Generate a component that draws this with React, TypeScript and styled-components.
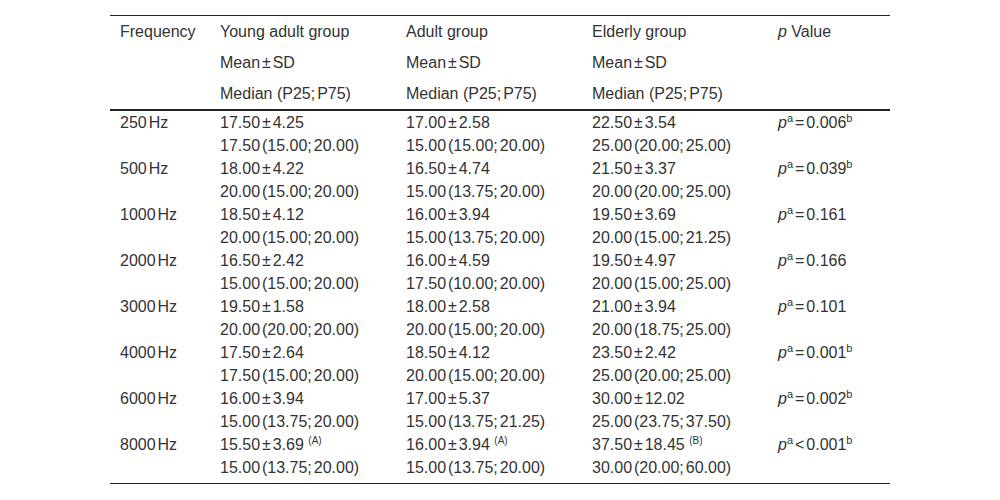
import styled, { createGlobalStyle } from "styled-components";

const GlobalStyle = createGlobalStyle`
	body {
		margin: 0;
		background: #fff;
		font-family: "Liberation Sans", Arial, sans-serif;
		color: #333;
	}
`;

const Page = styled.div`
	display: flex;
	justify-content: center;
	padding-top: 15px;
`;

const Table = styled.table`
	width: 780px;
	border-collapse: separate;
	border-spacing: 0;
	border-top: 1px solid #222;
	border-bottom: 1px solid #222;
	font-size: 16px;
	table-layout: fixed;
`;

const HeadCell = styled.th<{ $last?: boolean }>`
	height: 31px;
	padding: 0 10px;
	text-align: left;
	font-weight: 400;
	vertical-align: middle;
	line-height: 18px;
	white-space: nowrap;
	border-bottom: ${({ $last }) => ($last ? "2px solid #222" : "none")};
`;

const Tight = styled.span`
	word-spacing: -2.5px;
`;

const Cell = styled.td<{ $end?: boolean }>`
	padding: 0 10px ${({ $end }) => ($end ? "4px" : "0")};
	vertical-align: top;
	line-height: 23px;
	white-space: nowrap;
	word-spacing: -2.5px;
`;

const Line = styled.div`
	height: 23px;
`;

const Italic = styled.i`
	font-style: italic;
`;

const Sup = styled.sup`
	font-size: 11px;
	line-height: 0;
	vertical-align: 6px;
	word-spacing: normal;
`;

const Mark = styled.sup`
	font-size: 10px;
	line-height: 0;
	vertical-align: 6px;
	word-spacing: normal;
`;

const MarkGap = styled.span`
	word-spacing: normal;
`;

interface IGroup {
	mean: string;
	median: string;
	mark?: string;
}

interface IRow {
	freq: string;
	groups: IGroup[];
	op: string;
	p: string;
	sig: boolean;
}

const rows: IRow[] = [
	{ freq: "250", groups: [{ mean: "17.50 ± 4.25", median: "17.50 (15.00; 20.00)" }, { mean: "17.00 ± 2.58", median: "15.00 (15.00; 20.00)" }, { mean: "22.50 ± 3.54", median: "25.00 (20.00; 25.00)" }], op: "=", p: "0.006", sig: true },
	{ freq: "500", groups: [{ mean: "18.00 ± 4.22", median: "20.00 (15.00; 20.00)" }, { mean: "16.50 ± 4.74", median: "15.00 (13.75; 20.00)" }, { mean: "21.50 ± 3.37", median: "20.00 (20.00; 25.00)" }], op: "=", p: "0.039", sig: true },
	{ freq: "1000", groups: [{ mean: "18.50 ± 4.12", median: "20.00 (15.00; 20.00)" }, { mean: "16.00 ± 3.94", median: "15.00 (13.75; 20.00)" }, { mean: "19.50 ± 3.69", median: "20.00 (15.00; 21.25)" }], op: "=", p: "0.161", sig: false },
	{ freq: "2000", groups: [{ mean: "16.50 ± 2.42", median: "15.00 (15.00; 20.00)" }, { mean: "16.00 ± 4.59", median: "17.50 (10.00; 20.00)" }, { mean: "19.50 ± 4.97", median: "20.00 (15.00; 25.00)" }], op: "=", p: "0.166", sig: false },
	{ freq: "3000", groups: [{ mean: "19.50 ± 1.58", median: "20.00 (20.00; 20.00)" }, { mean: "18.00 ± 2.58", median: "20.00 (15.00; 20.00)" }, { mean: "21.00 ± 3.94", median: "20.00 (18.75; 25.00)" }], op: "=", p: "0.101", sig: false },
	{ freq: "4000", groups: [{ mean: "17.50 ± 2.64", median: "17.50 (15.00; 20.00)" }, { mean: "18.50 ± 4.12", median: "20.00 (15.00; 20.00)" }, { mean: "23.50 ± 2.42", median: "25.00 (20.00; 25.00)" }], op: "=", p: "0.001", sig: true },
	{ freq: "6000", groups: [{ mean: "16.00 ± 3.94", median: "15.00 (13.75; 20.00)" }, { mean: "17.00 ± 5.37", median: "15.00 (13.75; 21.25)" }, { mean: "30.00 ± 12.02", median: "25.00 (23.75; 37.50)" }], op: "=", p: "0.002", sig: true },
	{ freq: "8000", groups: [{ mean: "15.50 ± 3.69", median: "15.00 (13.75; 20.00)", mark: "(A)" }, { mean: "16.00 ± 3.94", median: "15.00 (13.75; 20.00)", mark: "(A)" }, { mean: "37.50 ± 18.45", median: "30.00 (20.00; 60.00)", mark: "(B)" }], op: "<", p: "0.001", sig: true },
];

const groupHeads = ["Young adult group", "Adult group", "Elderly group"];

const App = (): JSX.Element => {
	return (
		<Page>
			<GlobalStyle />
			<Table>
				<colgroup>
					<col style={{ width: 100 }} />
					<col style={{ width: 186 }} />
					<col style={{ width: 186 }} />
					<col style={{ width: 186 }} />
					<col style={{ width: 122 }} />
				</colgroup>
				<thead>
					<tr>
						<HeadCell>Frequency</HeadCell>
						{groupHeads.map((h) => (
							<HeadCell key={h}>{h}</HeadCell>
						))}
						<HeadCell>
							<Italic>p</Italic> Value
						</HeadCell>
					</tr>
					<tr>
						<HeadCell />
						{groupHeads.map((h) => (
							<HeadCell key={h}>
								<Tight>Mean ± SD</Tight>
							</HeadCell>
						))}
						<HeadCell />
					</tr>
					<tr>
						<HeadCell $last />
						{groupHeads.map((h) => (
							<HeadCell $last key={h}>
								Median (P25;<Tight> </Tight>P75)
							</HeadCell>
						))}
						<HeadCell $last />
					</tr>
				</thead>
				<tbody>
					{rows.map((row, i) => {
						const end = i === rows.length - 1;
						return (
							<tr key={row.freq}>
								<Cell $end={end}>{row.freq} Hz</Cell>
								{row.groups.map((g, j) => (
									<Cell $end={end} key={j}>
										<Line>
											{g.mean}
											{g.mark && (
												<>
													<MarkGap> </MarkGap>
													<Mark>{g.mark}</Mark>
												</>
											)}
										</Line>
										<Line>{g.median}</Line>
									</Cell>
								))}
								<Cell $end={end}>
									<Italic>p</Italic>
									<Sup>a</Sup> {row.op} {row.p}
									{row.sig && <Sup>b</Sup>}
								</Cell>
							</tr>
						);
					})}
				</tbody>
			</Table>
		</Page>
	);
};

export default App;
